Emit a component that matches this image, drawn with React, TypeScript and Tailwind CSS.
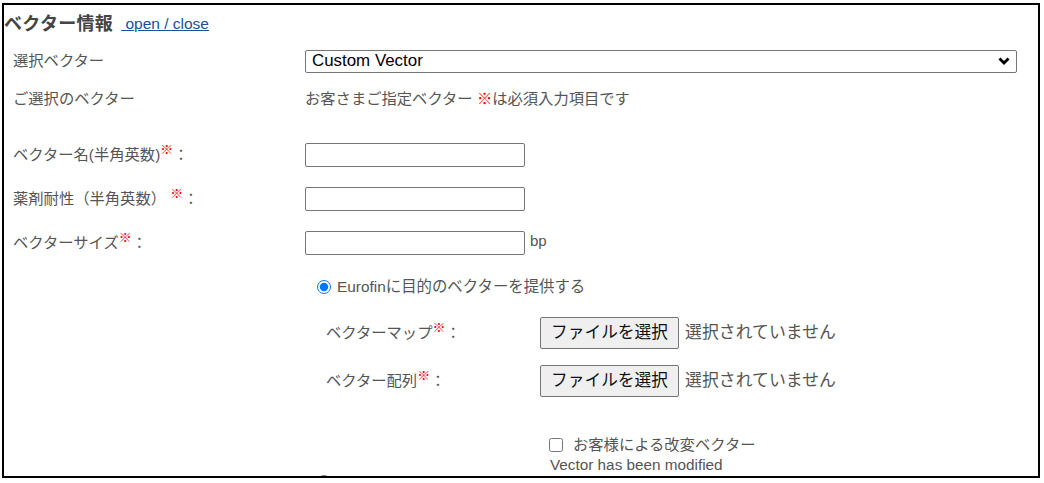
import React from "react";

const FONT = { fontFamily: '"Liberation Sans", "Noto Sans CJK JP", sans-serif' };

function Req({ sup = true }: { sup?: boolean }) {
  return sup ? (
    <span className="relative -top-[6px] text-[13px] text-[#ff0000]">※</span>
  ) : (
    <span className="text-[#ff0000]">※</span>
  );
}

function Row({ h, label, children }: { h: string; label: React.ReactNode; children?: React.ReactNode }) {
  return (
    <div className={`flex items-center ${h}`}>
      <div className="w-[301px] shrink-0 pl-[9px] text-[15.3px] leading-[20px] text-[#555]">{label}</div>
      <div className="flex items-center">{children}</div>
    </div>
  );
}

function TextBox() {
  return <div className="h-[24px] w-[220px] rounded-[2px] border border-[#767676] bg-white" />;
}

function FileRow({ label }: { label: React.ReactNode }) {
  return (
    <div className="flex h-[48px] items-center pl-[322px]">
      <div className="w-[214px] shrink-0 text-[15.3px] leading-[20px] text-[#555]">{label}</div>
      <div className="flex items-center">
        <div className="flex h-[32px] w-[139px] items-center justify-center rounded-[2px] border border-[#767676] bg-[#efefef] text-[16.7px] text-[#111]">
          ファイルを選択
        </div>
        <span className="ml-[6px] text-[16.9px] text-[#555]">選択されていません</span>
      </div>
    </div>
  );
}

export default function App() {
  return (
    <div className="h-[483px] w-[1044px] bg-white pl-[2px] pt-[3px]" style={FONT}>
      <div className="h-[475px] w-[1038px] overflow-hidden border-2 border-black">
        <div className="flex h-[38px] items-center">
          <span className="text-[18px] font-bold leading-[22px] tracking-[0.3px] text-[#444]">ベクター情報</span>
          <a href="#" className="ml-[8px] text-[15.5px] leading-[18px] text-[#1a4fa0] underline">
            {"\u00a0open / close"}
          </a>
        </div>

        <Row h="h-[36px]" label="選択ベクター">
          <div className="flex h-[23px] w-[712px] items-center justify-between rounded-[2px] border border-[#767676] bg-white pl-[6px] pr-[6px] text-[16.9px] text-black">
            <span>Custom Vector</span>
            <svg width="12" height="8" viewBox="0 0 12 8">
              <polyline points="1.5,1.5 6,6 10.5,1.5" fill="none" stroke="#000" strokeWidth="2.8" />
            </svg>
          </div>
        </Row>

        <Row h="h-[40px]" label="ご選択のベクター">
          <span className="text-[15.3px] text-[#555]">
            お客さまご指定ベクター <Req sup={false} />は必須入力項目です
          </span>
        </Row>

        <div className="h-[14px]" />

        <Row
          h="h-[44px]"
          label={
            <span>
              ベクター名(半角英数)<Req />：
            </span>
          }
        >
          <TextBox />
        </Row>
        <Row
          h="h-[44px]"
          label={
            <span>
              薬剤耐性（半角英数） <Req />：
            </span>
          }
        >
          <TextBox />
        </Row>
        <Row
          h="h-[44px]"
          label={
            <span>
              ベクターサイズ<Req />：
            </span>
          }
        >
          <TextBox />
          <span className="-mt-[4px] ml-[5px] text-[15px] text-[#555]">bp</span>
        </Row>

        <div className="flex h-[44px] items-center pl-[313px]">
          <input type="radio" defaultChecked readOnly className="m-0 h-[14px] w-[14px]" />
          <span className="ml-[6px] text-[15.4px] text-[#555]">Eurofinに目的のベクターを提供する</span>
        </div>

        <FileRow
          label={
            <span>
              ベクターマップ<Req />：
            </span>
          }
        />
        <FileRow
          label={
            <span>
              ベクター配列<Req />：
            </span>
          }
        />

        <div className="h-[30px]" />

        <div className="flex h-[20px] items-center pl-[545px]">
          <input type="checkbox" readOnly className="m-0 h-[14px] w-[14px]" />
          <span className="ml-[10px] text-[15.3px] text-[#555]">お客様による改変ベクター</span>
        </div>
        <div className="flex h-[20px] items-center pl-[546px] text-[15.3px] text-[#555]">Vector has been modified</div>

        <div className="flex h-[20px] items-start pl-[313px]">
          <input type="radio" readOnly className="m-0 h-[14px] w-[14px]" />
        </div>
      </div>
    </div>
  );
}
